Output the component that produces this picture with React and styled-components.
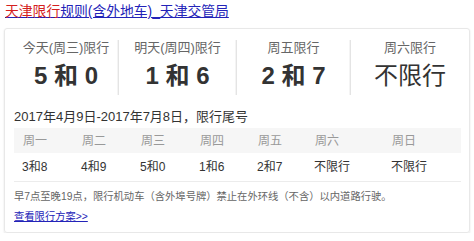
import React from "react";
import styled, { createGlobalStyle } from "styled-components";

const Global = createGlobalStyle`
  html, body { margin: 0; padding: 0; background: #fff; }
  body { font-family: Arial, "Liberation Sans", "Noto Sans CJK SC", sans-serif; }
`;

const Page = styled.div`
  padding: 3px 4px 0 4px;
  width: 466px;
`;

const Title = styled.h3`
  margin: 0 0 0 1px;
  font-weight: normal;
  font-size: 13.8px;
  line-height: 18px;
  height: 18px;
  font-family: Arial, "Liberation Sans", "Noto Sans CJK SC", sans-serif;
`;

const TitleLink = styled.a`
  color: #2323b8;
  text-decoration: underline;
`;

const Em = styled.em`
  font-style: normal;
  color: #d42020;
`;

const Card = styled.div`
  margin-top: 7px;
  border: 1px solid #e8e8e8;
  border-radius: 3px;
  box-shadow: 0 1px 2px rgba(0, 0, 0, 0.12);
  padding: 11px 8px 7px 9px;
`;

const StatRow = styled.div`
  display: grid;
  grid-template-columns: 104px 118px 114px 1fr;
  margin-right: -8px;
`;

const Stat = styled.div`
  display: flex;
  flex-direction: column;
  align-items: center;
  gap: 6px;
  padding-bottom: 5px;
  border-left: ${(p) => (p.$first ? "none" : "1px solid #e4e4e4")};
  box-shadow: ${(p) => (p.$first ? "none" : "-1px 0 0 #f4f4f4")};
`;

const StatLabel = styled.div`
  font-size: 13px;
  line-height: 16px;
  color: #666;
`;

const StatValue = styled.div`
  font-size: 24px;
  line-height: 28px;
  color: #333;
  font-weight: ${(p) => (p.$plain ? "normal" : "bold")};
  white-space: pre;
`;

const DateLine = styled.div`
  margin-top: 14px;
  font-size: 13px;
  line-height: 16px;
  color: #333;
`;

const Table = styled.div`
  margin-top: 3px;
  display: grid;
  grid-template-columns: 59px 59px 59px 58px 57px 77px 1fr;
`;

const HeadCell = styled.div`
  background: #f6f6f6;
  height: 25px;
  line-height: 27px;
  padding-left: 9px;
  font-size: 12px;
  color: #999;
`;

const Cell = styled.div`
  height: 28px;
  line-height: 29px;
  padding-left: 8px;
  font-size: 12px;
  color: #333;
  border-bottom: 1px solid #ececec;
`;

const Note = styled.div`
  margin-top: 7px;
  font-size: 10.3px;
  line-height: 16px;
  color: #666;
  white-space: nowrap;
`;

const MoreLink = styled.a`
  display: block;
  margin-top: 4px;
  font-size: 10.3px;
  line-height: 16px;
  color: #2323b8;
  text-decoration: underline;
`;

const stats = [
  { label: "今天(周三)限行", value: "5 和 0" },
  { label: "明天(周四)限行", value: "1 和 6" },
  { label: "周五限行", value: "2 和 7" },
  { label: "周六限行", value: "不限行", plain: true },
];

const days = ["周一", "周二", "周三", "周四", "周五", "周六", "周日"];
const nums = ["3和8", "4和9", "5和0", "1和6", "2和7", "不限行", "不限行"];

export default function App() {
  return (
    <>
      <Global />
      <Page>
        <Title>
          <TitleLink href="#">
            <Em>天津限行</Em>规则(含外地车)_天津交管局
          </TitleLink>
        </Title>
        <Card>
          <StatRow>
            {stats.map((s, i) => (
              <Stat key={s.label} $first={i === 0}>
                <StatLabel>{s.label}</StatLabel>
                <StatValue $plain={s.plain}>{s.value}</StatValue>
              </Stat>
            ))}
          </StatRow>
          <DateLine>2017年4月9日-2017年7月8日，限行尾号</DateLine>
          <Table>
            {days.map((d) => (
              <HeadCell key={d}>{d}</HeadCell>
            ))}
            {nums.map((n, i) => (
              <Cell key={i}>{n}</Cell>
            ))}
          </Table>
          <Note>早7点至晚19点，限行机动车（含外埠号牌）禁止在外环线（不含）以内道路行驶。</Note>
          <MoreLink href="#">查看限行方案&gt;&gt;</MoreLink>
        </Card>
      </Page>
    </>
  );
}
